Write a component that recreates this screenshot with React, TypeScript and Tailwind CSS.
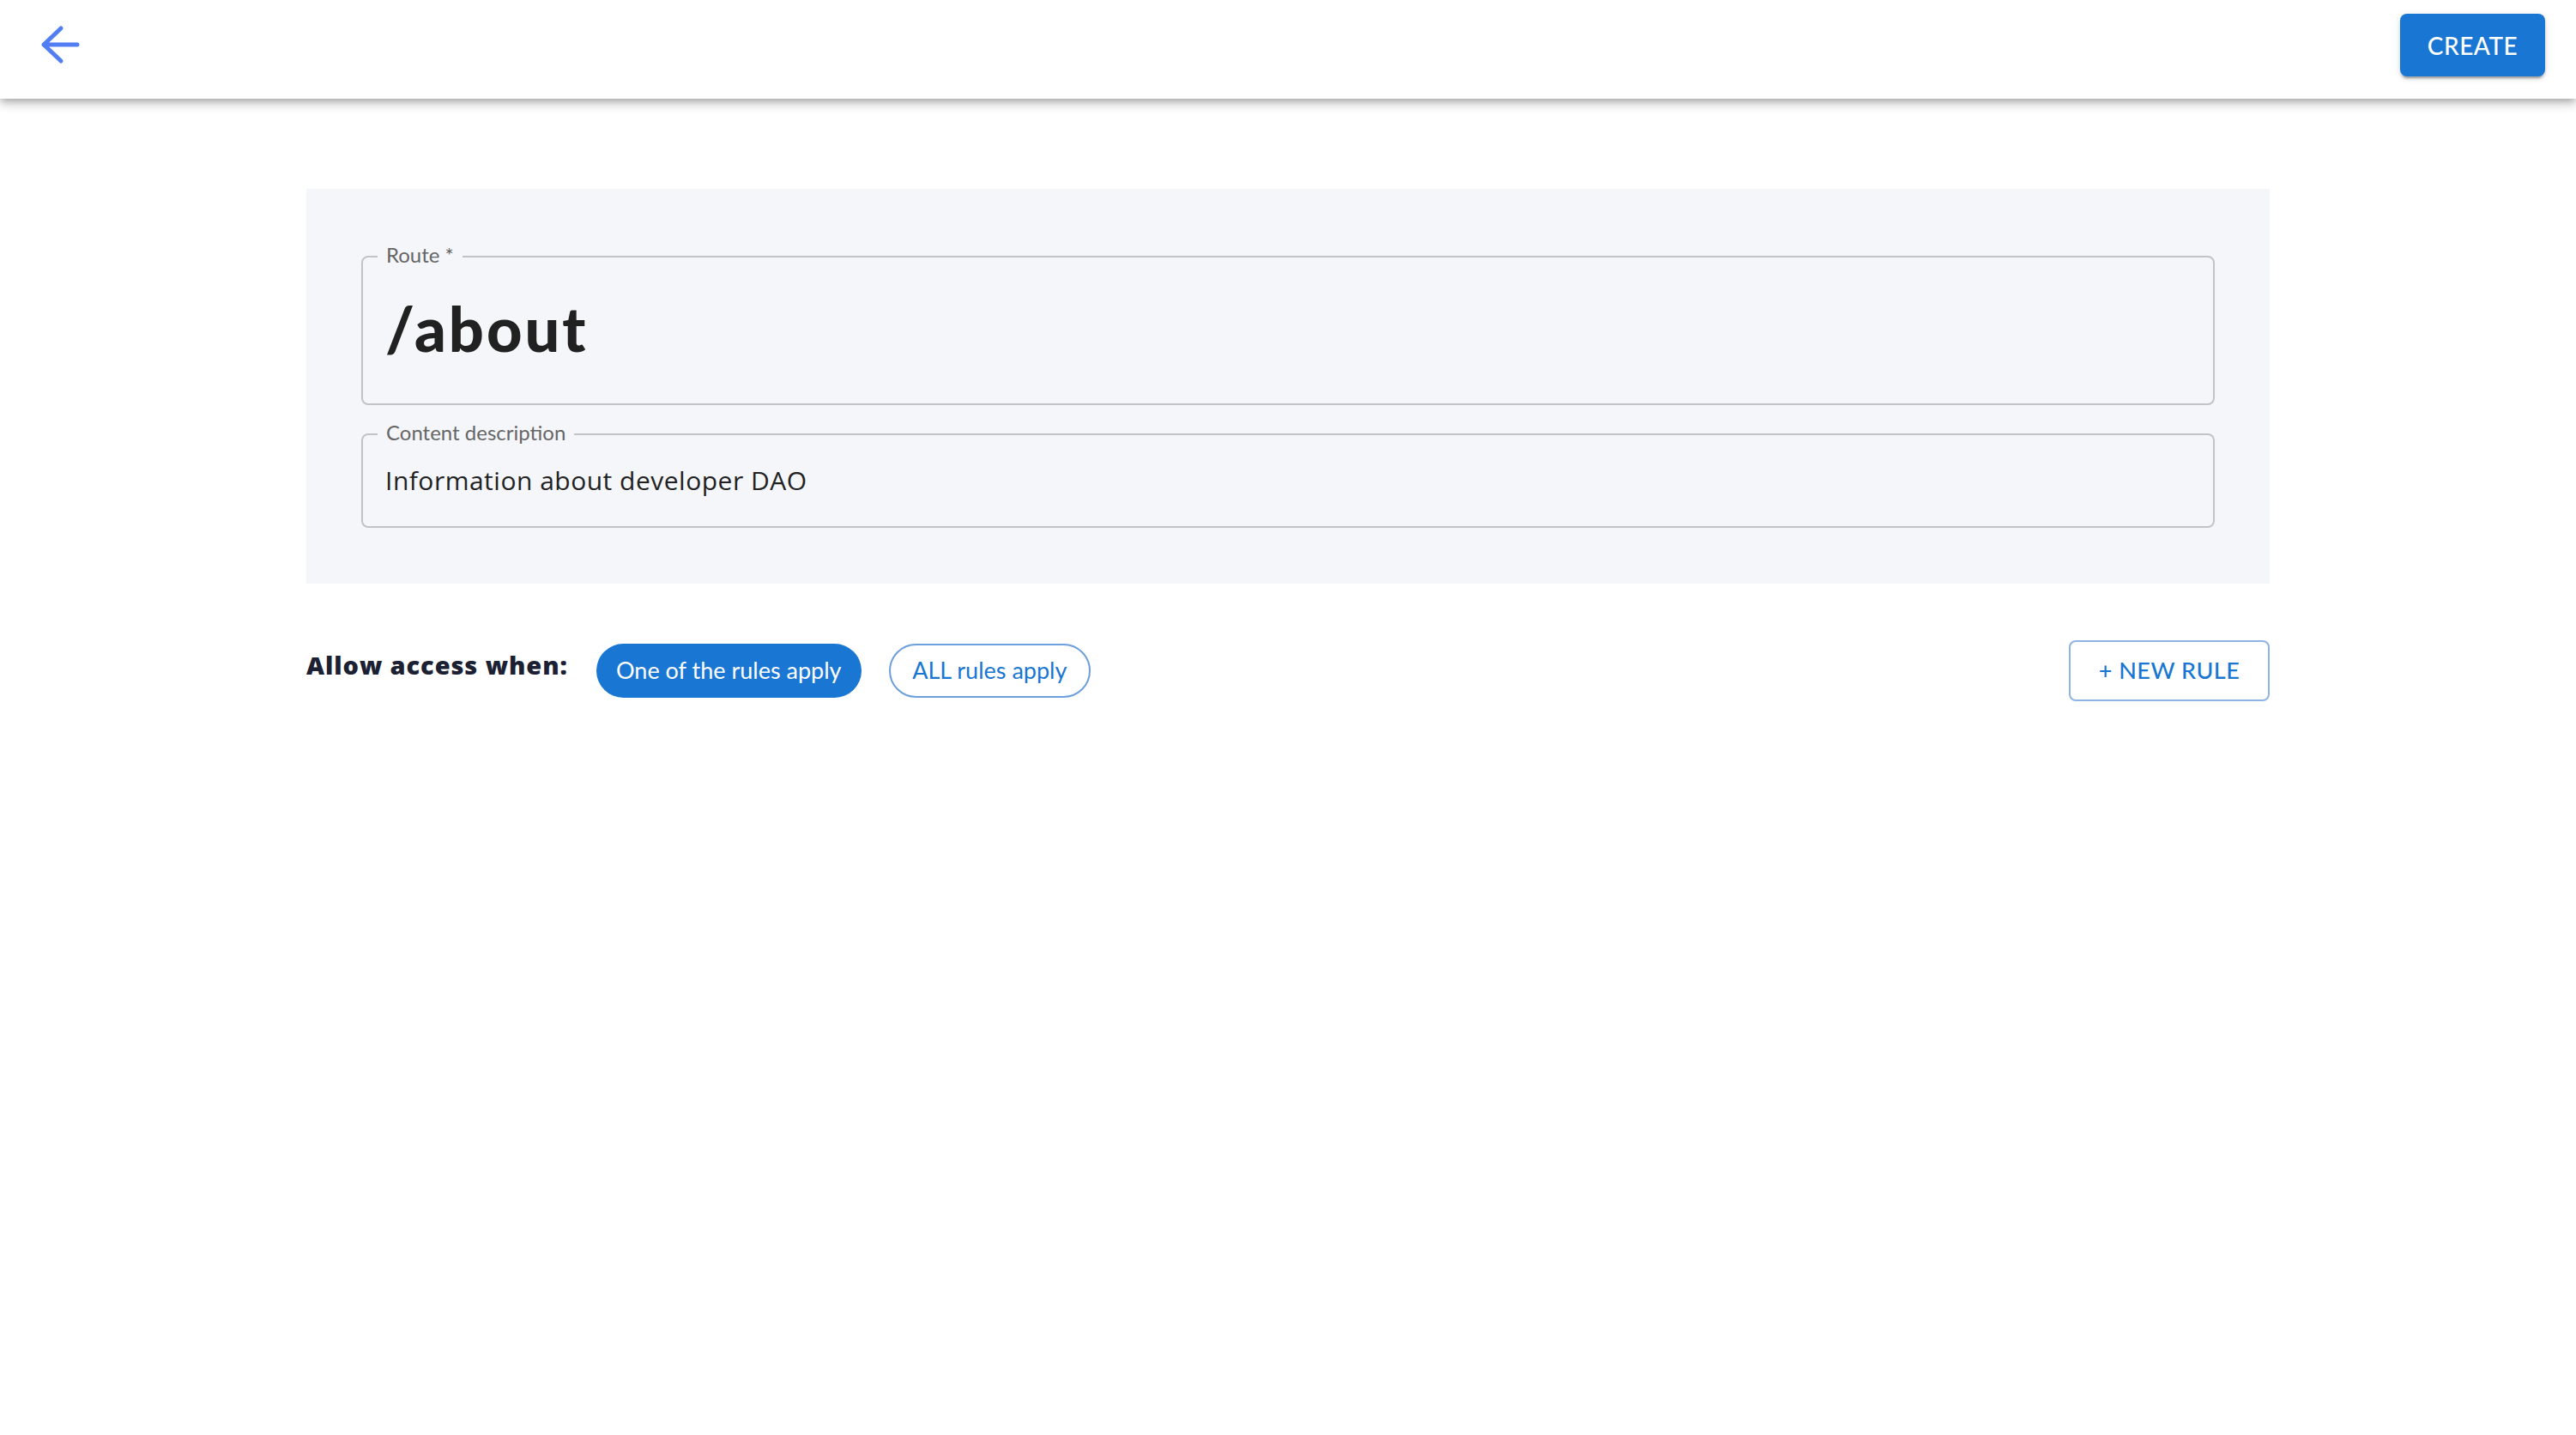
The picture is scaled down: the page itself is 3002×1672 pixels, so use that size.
export default function App() {
  return (
    <div className="min-h-screen w-full bg-white font-['Lato','Noto_Sans',sans-serif]">
      <header className="relative z-10 flex h-[115px] items-start justify-between bg-white pl-[46px] pr-[36px] pt-[16px] shadow-[0_3px_7px_-2px_rgba(0,0,0,0.2),0_7px_9px_0_rgba(0,0,0,0.14),0_2px_18px_0_rgba(0,0,0,0.12)]">
        <button className="mt-[13px] flex h-[46px] w-[50px] items-center justify-center" aria-label="Back">
          <svg width="50" height="46" viewBox="0 0 50 46" fill="none">
            <path
              d="M25 4 L5 23 L25 42 M5 23 H44"
              stroke="#527ef4"
              strokeWidth="5"
              strokeLinecap="round"
              strokeLinejoin="round"
            />
          </svg>
        </button>
        <button className="flex h-[73px] w-[169px] items-center justify-center rounded-[8px] bg-[#1976d2] text-[28px] font-medium tracking-[0.5px] text-white shadow-[0_5px_2px_-3px_rgba(0,0,0,0.2),0_3px_3px_0_rgba(0,0,0,0.14),0_2px_9px_0_rgba(0,0,0,0.12)]">
          CREATE
        </button>
      </header>

      <main className="mx-auto w-[2288px] pt-[105px]">
        <section className="flex flex-col gap-[33px] bg-[#f5f6fa] px-[64px] pb-[65px] pt-[78px]">
          <div className="relative flex h-[174px] items-center rounded-[8px] border-2 border-[#c2c3c7] pb-[6px] pl-[26px]">
            <span className="absolute left-[17px] top-[-18px] bg-[#f5f6fa] px-[10px] text-[24px] leading-[30px] text-[#666666]">
              Route *
            </span>
            <span className="text-[72px] font-black leading-none tracking-[3px] text-[#212121]">/about</span>
          </div>
          <div className="relative flex h-[110px] items-center rounded-[8px] border-2 border-[#c2c3c7] pl-[26px]">
            <span className="absolute left-[17px] top-[-18px] bg-[#f5f6fa] px-[10px] text-[24px] leading-[30px] text-[#666666]">
              Content description
            </span>
            <span className="font-['Open_Sans',sans-serif] text-[30px] leading-none tracking-[0.5px] text-[#222222]">
              Information about developer DAO
            </span>
          </div>
        </section>

        <div className="mt-[66px] flex items-center">
          <span className="mb-[14px] mr-[33px] whitespace-nowrap font-['Open_Sans',sans-serif] text-[29px] font-extrabold leading-none tracking-[0.9px] text-[#1c2033]">
            Allow access when:
          </span>
          <button className="flex h-[63px] w-[309px] items-center justify-center rounded-full bg-[#1976d2] text-[27px] text-white">
            One of the rules apply
          </button>
          <button className="ml-[32px] flex h-[63px] w-[235px] items-center justify-center rounded-full border-2 border-[#6c9fdc] text-[27px] text-[#1976d2]">
            ALL rules apply
          </button>
          <div className="flex-1" />
          <button className="flex h-[71px] w-[234px] items-center justify-center rounded-[8px] border-2 border-[#8fb3e3] text-[27px] font-medium tracking-[0.5px] text-[#1976d2]">
            + NEW RULE
          </button>
        </div>
      </main>
    </div>
  );
}
